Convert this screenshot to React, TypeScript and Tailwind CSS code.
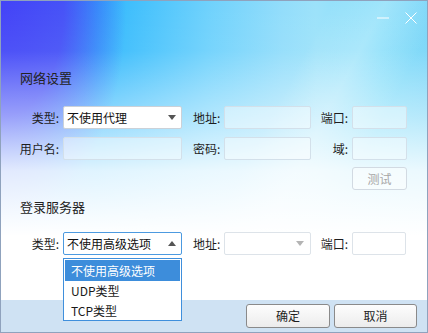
import React from "react";

function Arrow({ up = false, color = "#555" }: { up?: boolean; color?: string }) {
  return (
    <svg width="8" height="5" viewBox="0 0 8 5" className="block">
      {up ? <path d="M0 5 L4 0 L8 5 Z" fill={color} /> : <path d="M0 0 L8 0 L4 5 Z" fill={color} />}
    </svg>
  );
}

function Field({ w }: { w: string }) {
  return <div className={`${w} h-[23px] rounded-[2px] border border-[#d3e0ea] bg-[rgba(255,255,255,0.42)]`} />;
}

export default function App() {
  return (
    <div className="relative w-[428px] h-[333px] overflow-hidden border border-[#8fa2bd] flex flex-col font-['Noto_Sans_CJK_SC','Microsoft_YaHei',sans-serif] text-[12px] text-[#1e1e1e] [background-image:linear-gradient(180deg,rgba(255,255,255,0)_0px,rgba(255,255,255,0.05)_50px,rgba(255,255,255,0.45)_115px,rgba(255,255,255,0.85)_170px,#fff_235px),linear-gradient(118deg,rgba(255,255,255,0)_55%,rgba(255,255,255,0.25)_64%,rgba(255,255,255,0)_74%),radial-gradient(ellipse_125px_210px_at_0px_10px,#4343f7_0%,#4652f7_50%,rgba(80,110,250,0)_100%),linear-gradient(90deg,#3a8cfa_0px,#2db6fc_95px,#4cc4fc_150px,#70d2fc_210px,#92ddfb_280px,#9ce2fa_315px,#82ddfa_380px,#7ad6f8_428px)]">
      {/* title bar */}
      <div className="h-[33px] flex justify-end items-center pr-[10px] gap-[16px]">
        <svg width="12" height="12" viewBox="0 0 12 12" className="block">
          <path d="M0 6 H12" stroke="#fff" strokeWidth="1" />
        </svg>
        <svg width="12" height="12" viewBox="0 0 12 12" className="block">
          <path d="M0.5 0.5 L11.5 11.5 M11.5 0.5 L0.5 11.5" stroke="#fff" strokeWidth="1" />
        </svg>
      </div>

      {/* 网络设置 */}
      <div className="mt-[34px] pl-[19px] text-[13px] leading-[19px] text-[#222]">网络设置</div>

      <div className="mt-[19px] flex h-[23px] items-center">
        <div className="w-[58px] text-right leading-[23px]">类型:</div>
        <div className="ml-[4px] w-[119px] h-[23px] rounded-[2px] border border-[#cbd1d8] bg-white flex items-center justify-between pl-[3px] pr-[5px] text-[#111]">
          <span className="leading-[21px]">不使用代理</span>
          <Arrow />
        </div>
        <div className="w-[42px] pl-[11px] leading-[23px]">地址:</div>
        <Field w="w-[87px]" />
        <div className="w-[41px] pr-[4px] text-right leading-[23px]">端口:</div>
        <Field w="w-[55px]" />
      </div>

      <div className="mt-[8px] flex h-[23px] items-center">
        <div className="w-[58px] text-right leading-[23px]">用户名:</div>
        <div className="ml-[4px]">
          <Field w="w-[119px]" />
        </div>
        <div className="w-[42px] pl-[11px] leading-[23px]">密码:</div>
        <Field w="w-[87px]" />
        <div className="w-[41px] pr-[4px] text-right leading-[23px]">域:</div>
        <Field w="w-[55px]" />
      </div>

      <div className="mt-[7px] flex h-[23px]">
        <div className="ml-[351px] w-[55px] h-[23px] rounded-[3px] border border-[#d2dae2] bg-[rgba(255,255,255,0.45)] flex items-center justify-center text-[#a6a6a6] leading-[21px]">
          测试
        </div>
      </div>

      {/* 登录服务器 */}
      <div className="mt-[7px] pl-[19px] text-[13px] leading-[19px] text-[#222]">登录服务器</div>

      <div className="mt-[16px] flex h-[23px] items-center">
        <div className="w-[58px] text-right leading-[23px]">类型:</div>
        <div className="ml-[4px] w-[119px] h-[23px] rounded-[2px] border border-[#4c9ae0] bg-white flex items-center justify-between pl-[3px] pr-[5px] text-[#111]">
          <span className="leading-[21px]">不使用高级选项</span>
          <Arrow up />
        </div>
        <div className="w-[42px] pl-[11px] leading-[23px]">地址:</div>
        <div className="w-[87px] h-[23px] rounded-[2px] border border-[#dde3e9] bg-[rgba(255,255,255,0.9)] flex items-center justify-end pr-[6px]">
          <Arrow color="#b4b4b4" />
        </div>
        <div className="w-[41px] pr-[4px] text-right leading-[23px]">端口:</div>
        <div className="w-[54px] h-[23px] rounded-[2px] border border-[#dde3e9] bg-white" />
      </div>

      <div className="flex-1" />

      {/* footer */}
      <div className="h-[32px] bg-[#cfe2f3] flex items-center justify-end gap-[4px] pr-[10px]">
        <div className="w-[84px] h-[24px] rounded-[3px] border border-[#8a8a8a] bg-[linear-gradient(180deg,#fdfdfd,#ececec)] flex items-center justify-center leading-[22px] text-[#1e1e1e]">
          确定
        </div>
        <div className="w-[83px] h-[24px] rounded-[3px] border border-[#8a8a8a] bg-[linear-gradient(180deg,#fdfdfd,#ececec)] flex items-center justify-center leading-[22px] text-[#1e1e1e]">
          取消
        </div>
      </div>

      {/* dropdown list */}
      <div className="absolute left-[62px] top-[257px] w-[119px] h-[63px] border border-[#3f8fdc] bg-white p-[1px] flex flex-col text-[#1a1a1a] text-[12px]">
        <div className="h-[21px] bg-[#3d8ddb] text-white pl-[6px] leading-[21px]">不使用高级选项</div>
        <div className="h-[20px] pl-[6px] leading-[20px]">UDP类型</div>
        <div className="h-[20px] pl-[6px] leading-[20px]">TCP类型</div>
      </div>
    </div>
  );
}
